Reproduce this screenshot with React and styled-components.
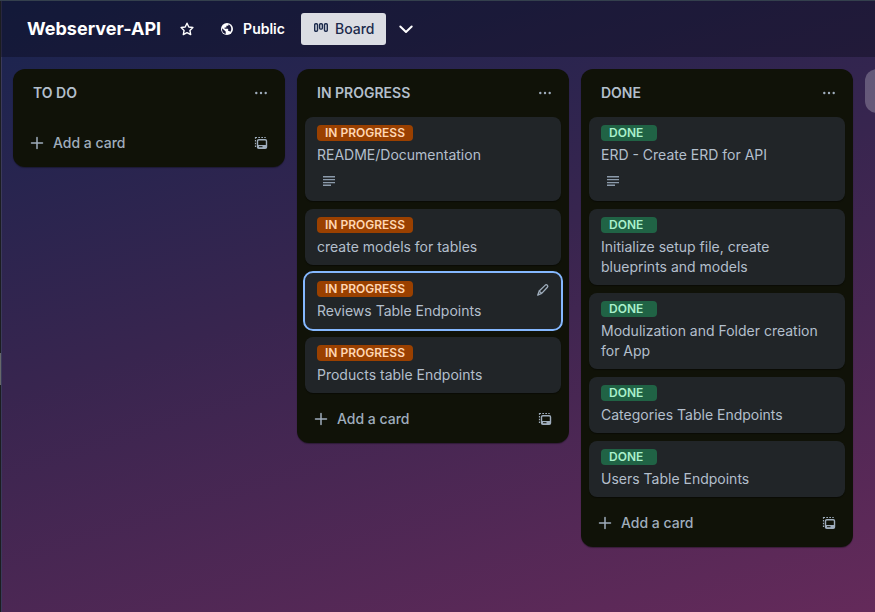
import React from "react";
import styled, { createGlobalStyle, css } from "styled-components";

const GlobalStyle = createGlobalStyle`
  *, *::before, *::after { box-sizing: border-box; }
  body {
    margin: 0;
    background: #1b1d20;
    font-family: Inter, "Liberation Sans", sans-serif;
    font-size: 14px;
    line-height: 20px;
    color: #b3bfcc;
  }
  button { font: inherit; border: 0; background: none; color: inherit; cursor: pointer; padding: 0; }
  h1, h2, p, ul { margin: 0; padding: 0; }
  ul { list-style: none; }
  svg { display: block; flex: none; }
`;

const Shell = styled.div`
  display: flex;
  min-height: 100vh;
  overflow: hidden;
  border-top: 1px solid #34404d;
`;

const Rail = styled.div`
  display: flex;
  align-items: center;
  flex: 0 0 1px;
  padding-top: 125px;
  background: #1b1d20;
`;

const RailHandle = styled.div`
  flex: 1;
  height: 32px;
  background: #66686a;
`;

const Page = styled.main`
  display: flex;
  flex-direction: column;
  flex: 1;
  min-width: 0;
  box-shadow: inset 1px 0 #3b3a5a;
  background: linear-gradient(163deg, #19244f 0%, #38254f 45%, #642a5a 100%);
`;

const Header = styled.header`
  display: flex;
  align-items: center;
  height: 56px;
  padding: 0 12px 0 26px;
  background: rgba(10, 11, 24, 0.4);
  color: #ffffff;
`;

const BoardTitle = styled.h1`
  margin-right: 10px;
  font-size: 18px;
  line-height: 32px;
  font-weight: 700;
`;

const HeaderButton = styled.button`
  display: flex;
  align-items: center;
  justify-content: center;
  gap: 8px;
  height: 32px;
  min-width: 32px;
  border-radius: 3px;
  font-weight: 600;
  ${(p) =>
    p.$labelled &&
    css`
      margin-left: 8px;
      padding: 0 8px;
    `}
  ${(p) =>
    p.$selected &&
    css`
      margin-right: 4px;
      padding: 0 12px;
      gap: 6px;
      background: #dbdde3;
      color: #1b2a4c;
      font-weight: 500;
    `}
`;

const Lists = styled.div`
  display: flex;
  align-items: flex-start;
  gap: 12px;
  padding: 12px;
`;

const List = styled.section`
  flex: 0 0 272px;
  padding: 0 8px 8px;
  border-radius: 12px;
  background: #101208;
  box-shadow: 0 1px 1px rgba(9, 10, 16, 0.4);
`;

const ListHeader = styled.div`
  display: flex;
  align-items: center;
  justify-content: space-between;
  height: 48px;
  padding: 0 0 0 12px;
`;

const ListTitle = styled.h2`
  font-size: 14px;
  line-height: 20px;
  font-weight: 600;
`;

const IconButton = styled.button`
  display: grid;
  place-items: center;
  width: 32px;
  height: 32px;
  border-radius: 8px;
  color: #9fadbc;
`;

const Cards = styled.ul`
  display: flex;
  flex-direction: column;
  gap: 8px;
`;

const Card = styled.li`
  position: relative;
  padding: 8px 12px;
  border-radius: 8px;
  background: #212528;
  box-shadow: 0 1px 1px rgba(0, 0, 0, 0.4);
  ${(p) => p.$active && css`outline: 2px solid #85b8ff;`}
`;

const EditButton = styled(IconButton)`
  position: absolute;
  top: 1px;
  right: 2px;
`;

const Label = styled.span`
  display: block;
  width: fit-content;
  min-width: 56px;
  height: 16px;
  margin-bottom: 4px;
  padding: 0 8px;
  border-radius: 4px;
  font-size: 12px;
  line-height: 16px;
  font-weight: 600;
  background: ${(p) => (p.$tone === "green" ? "#206345" : "#9a4000")};
  color: ${(p) => (p.$tone === "green" ? "#a9f0cb" : "#ffd6b3")};
`;

const Badge = styled.span`
  display: flex;
  align-items: center;
  height: 24px;
  margin-top: 4px;
  padding-left: 4px;
  color: #8c9bab;
`;

const ListFooter = styled.div`
  display: flex;
  align-items: center;
  padding-top: 10px;
`;

const AddButton = styled.button`
  display: flex;
  align-items: center;
  flex: 1;
  gap: 8px;
  height: 32px;
  padding-left: 8px;
  color: #9fadbc;
  font-weight: 500;
`;

const AddListButton = styled.button`
  flex: 0 0 272px;
  height: 44px;
  border-radius: 12px;
  background: rgba(255, 255, 255, 0.24);
`;

const StarIcon = () => (
  <svg width="16" height="16" viewBox="0 0 16 16" fill="none" stroke="currentColor" strokeWidth="1.4" strokeLinejoin="round" aria-hidden="true">
    <path d="M8 2.2 9.8 6l4.1.5-3 2.9.8 4.2L8 11.6l-3.7 2 .8-4.2-3-2.9L6.2 6Z" />
  </svg>
);

const GlobeIcon = () => (
  <svg width="16" height="16" viewBox="0 0 16 16" aria-hidden="true">
    <circle cx="8" cy="8" r="6" fill="currentColor" />
    <path d="M3.1 7.2 6.7 10.6v2.3A5 5 0 0 1 3.1 7.2ZM9.6 3.3v.5q0 1-1 1H7.4v1.1q0 .5-.6.5H5.6v1.3h3q.6 0 .6.6v1.8h.8q.8 0 1.2.8A5 5 0 0 0 9.6 3.3Z" fill="#19193a" />
  </svg>
);

const BoardIcon = () => (
  <svg width="16" height="16" viewBox="0 0 16 16" fill="none" stroke="currentColor" strokeWidth="1.4" aria-hidden="true">
    <rect x="1.7" y="2.7" width="2.8" height="7.6" rx="1" />
    <rect x="6.6" y="2.7" width="2.8" height="5.4" rx="1" />
    <rect x="11.5" y="2.7" width="2.8" height="7.6" rx="1" />
  </svg>
);

const ChevronIcon = () => (
  <svg width="16" height="16" viewBox="0 0 16 16" fill="none" stroke="currentColor" strokeWidth="2" strokeLinecap="round" strokeLinejoin="round" aria-hidden="true">
    <path d="m2.3 5.5 5.7 5.5 5.7-5.5" />
  </svg>
);

const MoreIcon = () => (
  <svg width="16" height="16" viewBox="0 0 16 16" fill="currentColor" aria-hidden="true">
    <circle cx="3.3" cy="8" r="1.2" />
    <circle cx="8" cy="8" r="1.2" />
    <circle cx="12.7" cy="8" r="1.2" />
  </svg>
);

const PlusIcon = () => (
  <svg width="16" height="16" viewBox="0 0 16 16" fill="none" stroke="currentColor" strokeWidth="1.5" strokeLinecap="round" aria-hidden="true">
    <path d="M8 2.5v11M2.5 8h11" />
  </svg>
);

const TemplateIcon = () => (
  <svg width="16" height="16" viewBox="0 0 16 16" fill="none" stroke="currentColor" aria-hidden="true">
    <path d="M2.5 12V10.500M2.500 9.300V7.800M2.500 6.500V5M2.500 3.800V2.500H4M5.300 2.500H7M8.300 2.500H10M11.300 2.500h1.400" strokeWidth="1.200" />
    <rect x="4.500" y="4.700" width="9" height="8.500" rx="1.300" strokeWidth="1.400" />
    <path d="M4.500 10h9v3h-9z" fill="currentColor" stroke="none" />
    <path d="M6 11.700h3.500" stroke="#101208" strokeWidth="1" />
  </svg>
);

const DescriptionIcon = () => (
  <svg width="16" height="16" viewBox="0 0 16 16" fill="currentColor" aria-hidden="true">
    <path d="M2 3h12v1.500H2zM2 6h12v1.300H2zM2 9h12v1.300H2zM2 11.500h8V13H2z" />
  </svg>
);

const PencilIcon = () => (
  <svg width="16" height="16" viewBox="0 0 16 16" fill="none" stroke="currentColor" strokeWidth="1.3" strokeLinejoin="round" aria-hidden="true">
    <path d="M4.200 9 10.300 3.100q1-.9 2 .1t.1 2L6.700 11.400 4.200 9ZM4.200 9l-1.500 4.200 4-1.800" />
  </svg>
);

const lists = [
  { title: "TO DO", cards: [] },
  {
    title: "IN PROGRESS",
    tone: "orange",
    cards: [
      { text: "README/Documentation", description: true },
      { text: "create models for tables" },
      { text: "Reviews Table Endpoints", active: true },
      { text: "Products table Endpoints" },
    ],
  },
  {
    title: "DONE",
    tone: "green",
    cards: [
      { text: "ERD - Create ERD for API", description: true },
      { text: "Initialize setup file, create blueprints and models" },
      { text: "Modulization and Folder creation for App" },
      { text: "Categories Table Endpoints" },
      { text: "Users Table Endpoints" },
    ],
  },
];

function BoardList({ list }) {
  return (
    <List aria-label={list.title}>
      <ListHeader>
        <ListTitle>{list.title}</ListTitle>
        <IconButton aria-label="List actions"><MoreIcon /></IconButton>
      </ListHeader>
      <Cards>
        {list.cards.map((card) => (
          <Card key={card.text} $active={card.active}>
            <Label $tone={list.tone}>{list.title}</Label>
            <p>{card.text}</p>
            {card.description && <Badge><DescriptionIcon /></Badge>}
            {card.active && <EditButton aria-label="Edit card"><PencilIcon /></EditButton>}
          </Card>
        ))}
      </Cards>
      <ListFooter>
        <AddButton><PlusIcon />Add a card</AddButton>
        <IconButton aria-label="Create from template"><TemplateIcon /></IconButton>
      </ListFooter>
    </List>
  );
}

export default function App() {
  return (
    <>
      <GlobalStyle />
      <Shell>
        <Rail><RailHandle /></Rail>
        <Page>
          <Header>
            <BoardTitle>Webserver-API</BoardTitle>
            <HeaderButton aria-label="Star board"><StarIcon /></HeaderButton>
            <HeaderButton $labelled><GlobeIcon />Public</HeaderButton>
            <HeaderButton $labelled $selected><BoardIcon />Board</HeaderButton>
            <HeaderButton aria-label="Board views"><ChevronIcon /></HeaderButton>
          </Header>
          <Lists>
            {lists.map((list) => <BoardList key={list.title} list={list} />)}
            <AddListButton aria-label="Add another list" />
          </Lists>
        </Page>
      </Shell>
    </>
  );
}
